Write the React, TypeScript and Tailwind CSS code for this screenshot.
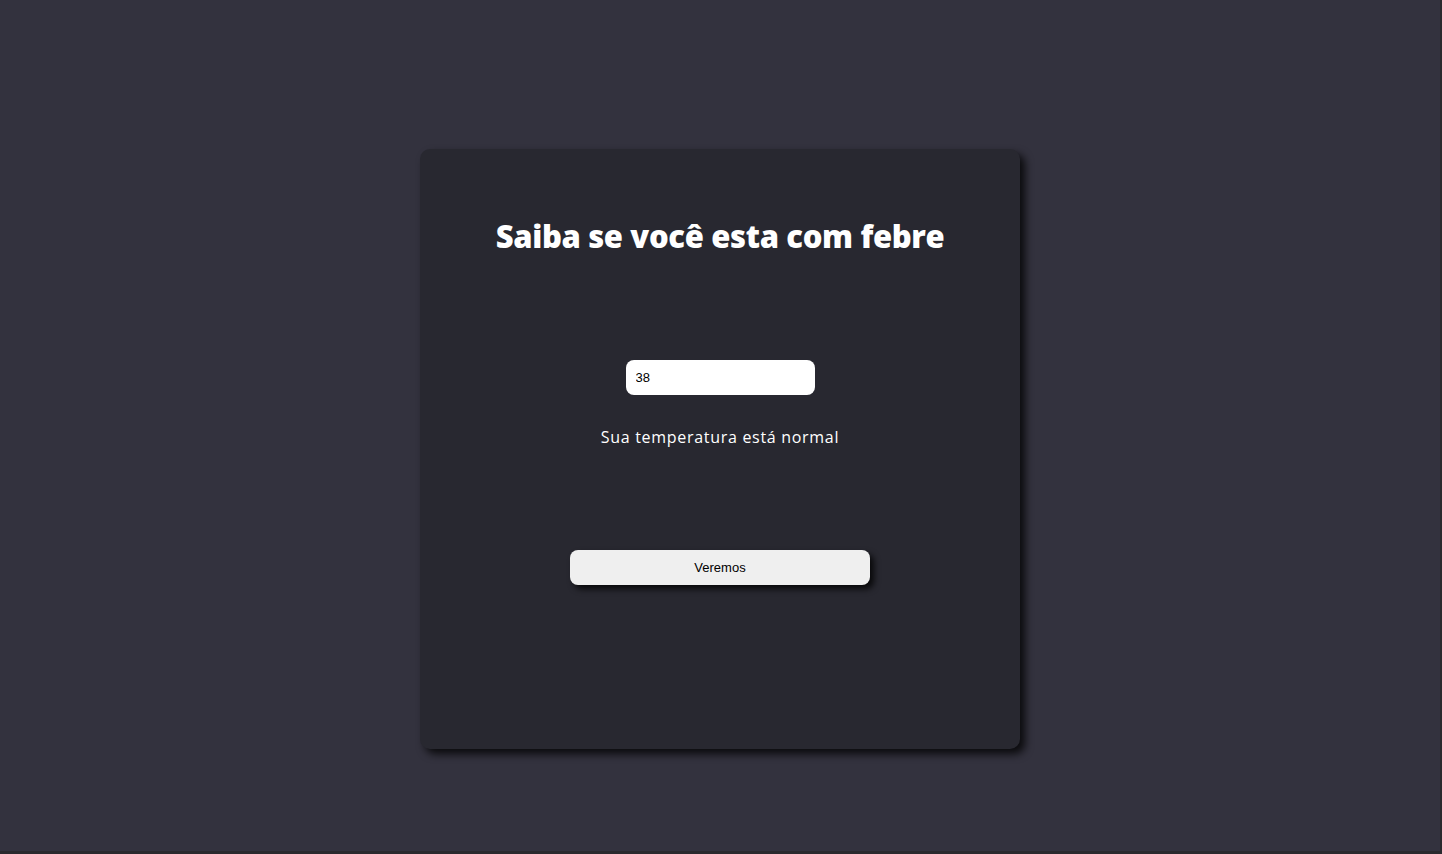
import React from "react";

export default function App() {
  return (
    <div className="w-[1442px] h-[854px] bg-[#2a2a2e] overflow-hidden">
      <div className="w-[1440px] h-[851px] bg-[#33323e] flex justify-center pt-[149px]">
        <div className="w-[600px] h-[600px] bg-[#282830] rounded-[10px] shadow-[5px_5px_8px_rgba(0,0,0,0.8)] flex flex-col items-center">
          <h1 className="mt-[67px] text-white text-[31px] font-extrabold leading-[40px] tracking-[-0.35px] font-['Open_Sans',sans-serif]">
            Saiba se você esta com febre
          </h1>
          <input
            defaultValue="38"
            className="mt-[104px] w-[189px] h-[35px] bg-white rounded-[8px] px-[10px] text-[13px] text-black outline-none font-['Arial','Liberation_Sans',sans-serif]"
          />
          <p className="mt-[30px] text-white text-[16px] leading-[24px] font-['Open_Sans',sans-serif] tracking-[0.7px]">
            Sua temperatura está normal
          </p>
          <button className="mt-[101px] w-[300px] h-[35px] bg-[#efefef] rounded-[8px] text-[13px] text-black shadow-[4px_4px_6px_rgba(0,0,0,0.8)] font-['Arial','Liberation_Sans',sans-serif]">
            Veremos
          </button>
        </div>
      </div>
    </div>
  );
}
